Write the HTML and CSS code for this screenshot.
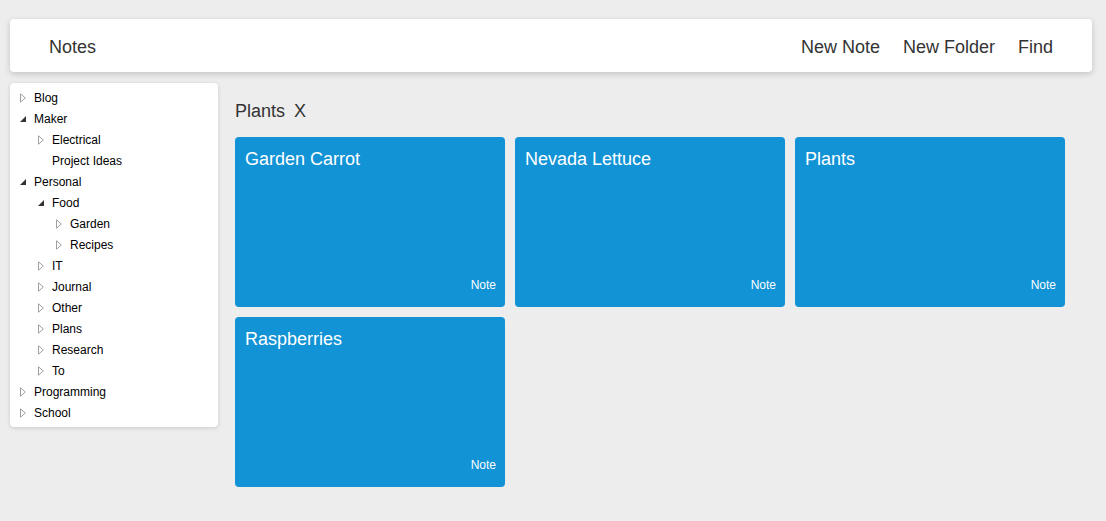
FILE: index.html
```html
<!DOCTYPE html>
<html>
<head>
<meta charset="utf-8">
<link rel="stylesheet" href="styles.css">
</head>
<body>
<div class="app">
  <header class="topbar">
    <div class="brand">Notes</div>
    <nav class="actions">
      <span>New Note</span>
      <span>New Folder</span>
      <span>Find</span>
    </nav>
  </header>
  <div class="main">
    <aside class="tree">
      <div class="row l0"><svg class="tri" viewBox="0 0 6 10"><path d="M0.5 0.8 L5.3 5 L0.5 9.2 Z" fill="none" stroke="#a0a0a0" stroke-width="1"/></svg><span>Blog</span></div>
      <div class="row l0"><svg class="tri" viewBox="0 0 6 10"><path d="M0 8 L6 8 L6 2 Z" fill="#333"/></svg><span>Maker</span></div>
      <div class="row l1"><svg class="tri" viewBox="0 0 6 10"><path d="M0.5 0.8 L5.3 5 L0.5 9.2 Z" fill="none" stroke="#a0a0a0" stroke-width="1"/></svg><span>Electrical</span></div>
      <div class="row l1"><span class="tri"></span><span>Project Ideas</span></div>
      <div class="row l0"><svg class="tri" viewBox="0 0 6 10"><path d="M0 8 L6 8 L6 2 Z" fill="#333"/></svg><span>Personal</span></div>
      <div class="row l1"><svg class="tri" viewBox="0 0 6 10"><path d="M0 8 L6 8 L6 2 Z" fill="#333"/></svg><span>Food</span></div>
      <div class="row l2"><svg class="tri" viewBox="0 0 6 10"><path d="M0.5 0.8 L5.3 5 L0.5 9.2 Z" fill="none" stroke="#a0a0a0" stroke-width="1"/></svg><span>Garden</span></div>
      <div class="row l2"><svg class="tri" viewBox="0 0 6 10"><path d="M0.5 0.8 L5.3 5 L0.5 9.2 Z" fill="none" stroke="#a0a0a0" stroke-width="1"/></svg><span>Recipes</span></div>
      <div class="row l1"><svg class="tri" viewBox="0 0 6 10"><path d="M0.5 0.8 L5.3 5 L0.5 9.2 Z" fill="none" stroke="#a0a0a0" stroke-width="1"/></svg><span>IT</span></div>
      <div class="row l1"><svg class="tri" viewBox="0 0 6 10"><path d="M0.5 0.8 L5.3 5 L0.5 9.2 Z" fill="none" stroke="#a0a0a0" stroke-width="1"/></svg><span>Journal</span></div>
      <div class="row l1"><svg class="tri" viewBox="0 0 6 10"><path d="M0.5 0.8 L5.3 5 L0.5 9.2 Z" fill="none" stroke="#a0a0a0" stroke-width="1"/></svg><span>Other</span></div>
      <div class="row l1"><svg class="tri" viewBox="0 0 6 10"><path d="M0.5 0.8 L5.3 5 L0.5 9.2 Z" fill="none" stroke="#a0a0a0" stroke-width="1"/></svg><span>Plans</span></div>
      <div class="row l1"><svg class="tri" viewBox="0 0 6 10"><path d="M0.5 0.8 L5.3 5 L0.5 9.2 Z" fill="none" stroke="#a0a0a0" stroke-width="1"/></svg><span>Research</span></div>
      <div class="row l1"><svg class="tri" viewBox="0 0 6 10"><path d="M0.5 0.8 L5.3 5 L0.5 9.2 Z" fill="none" stroke="#a0a0a0" stroke-width="1"/></svg><span>To</span></div>
      <div class="row l0"><svg class="tri" viewBox="0 0 6 10"><path d="M0.5 0.8 L5.3 5 L0.5 9.2 Z" fill="none" stroke="#a0a0a0" stroke-width="1"/></svg><span>Programming</span></div>
      <div class="row l0"><svg class="tri" viewBox="0 0 6 10"><path d="M0.5 0.8 L5.3 5 L0.5 9.2 Z" fill="none" stroke="#a0a0a0" stroke-width="1"/></svg><span>School</span></div>
    </aside>
    <section class="content">
      <div class="crumb"><span>Plants</span><span class="close">X</span></div>
      <div class="cards">
        <div class="card"><div class="title">Garden Carrot</div><div class="kind">Note</div></div>
        <div class="card"><div class="title">Nevada Lettuce</div><div class="kind">Note</div></div>
        <div class="card"><div class="title">Plants</div><div class="kind">Note</div></div>
        <div class="card"><div class="title">Raspberries</div><div class="kind">Note</div></div>
      </div>
    </section>
  </div>
</div>
</body>
</html>
```
FILE: styles.css
```css
* { box-sizing: border-box; }
html, body {
  margin: 0;
  background: #ededed;
  font-family: "Liberation Sans", Arial, sans-serif;
  color: #333;
}
.app {
  padding: 19px 14px 0 10px;
}
.topbar {
  height: 53px;
  background: #fff;
  border-radius: 4px;
  box-shadow: 0 2px 6px rgba(0,0,0,0.18);
  display: flex;
  align-items: center;
  justify-content: space-between;
  padding: 3px 39px 0 39px;
  font-size: 18px;
  color: #333;
}
.actions {
  display: flex;
  gap: 23px;
}
.main {
  display: flex;
  align-items: flex-start;
  margin-top: 11px;
}
.tree {
  width: 208px;
  background: #fff;
  border-radius: 4px;
  box-shadow: 0 1px 4px rgba(0,0,0,0.15);
  padding: 4px 0 4px 0;
  font-size: 12px;
  color: #000;
}
.row {
  height: 21px;
  display: flex;
  align-items: center;
}
.row.l0 { padding-left: 10px; }
.row.l1 { padding-left: 28px; }
.row.l2 { padding-left: 46px; }
.tri {
  width: 6px;
  height: 10px;
  margin-right: 8px;
  flex: none;
  display: block;
}
.content {
  margin-left: 17px;
  flex: 1;
}
.crumb {
  font-size: 18px;
  color: #333;
  height: 25px;
  display: flex;
  align-items: center;
  gap: 9px;
  margin-top: 16px;
}
.cards {
  margin-top: 13px;
  display: grid;
  grid-template-columns: repeat(3, 270px);
  grid-auto-rows: 170px;
  gap: 10px;
}
.card {
  background: #1193d6;
  border-radius: 4px;
  color: #fff;
  display: flex;
  flex-direction: column;
  justify-content: space-between;
  padding: 12px 9px 15px 10px;
}
.title {
  font-size: 18px;
  line-height: 21px;
}
.kind {
  font-size: 12px;
  align-self: flex-end;
}
```
